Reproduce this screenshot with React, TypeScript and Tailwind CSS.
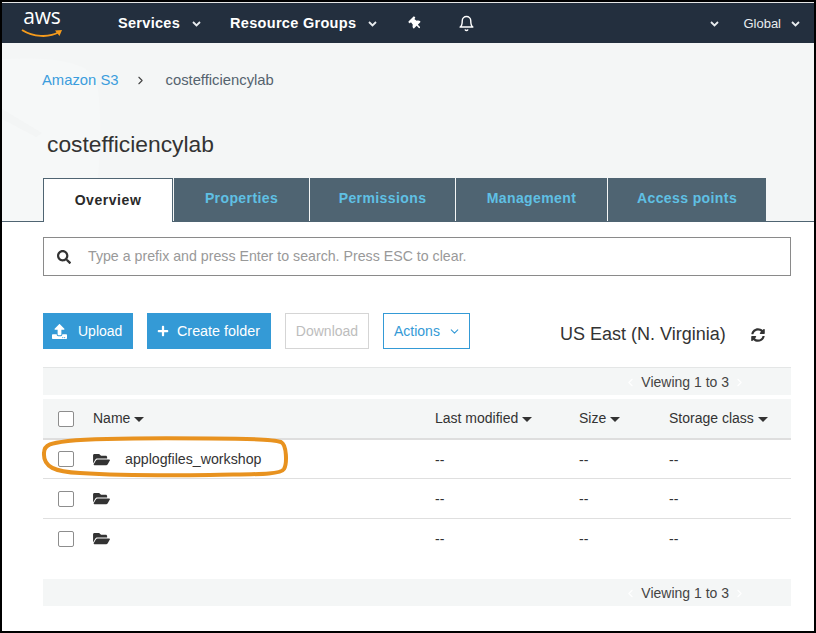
import React from "react";
import { FaFolderOpen, FaPlus, FaSearch, FaSyncAlt, FaThumbtack, FaUpload } from "react-icons/fa";
import { FiBell, FiChevronDown, FiChevronLeft, FiChevronRight } from "react-icons/fi";

function NavCaret() {
  return (
    <svg width="9" height="6" viewBox="0 0 9 6" className="shrink-0">
      <path d="M1 1 L4.5 4.5 L8 1" fill="none" stroke="#e8ecef" strokeWidth="1.8" />
    </svg>
  );
}

function Sortable({ label, className }: { label: string; className: string }) {
  return (
    <div className={`flex items-center gap-[4px] ${className}`}>
      <span>{label}</span>
      <svg width="10" height="5" viewBox="0 0 10 5" className="mt-[1px] shrink-0">
        <path d="M0 0 H10 L5 5 Z" fill="#333" />
      </svg>
    </div>
  );
}

function Check() {
  return <span className="block h-4 w-4 rounded-[2px] border border-[#8d8d8d] bg-white" />;
}

function Row({ name, h, last }: { name?: string; h: string; last?: boolean }) {
  const shift = last ? "" : "pt-[2px]";
  return (
    <div className={`flex items-center text-[14px] text-[#333] ${last ? "" : "border-b border-[#dfdfdf]"} ${h}`}>
      <div className="ml-[15px] w-[35px]"><Check /></div>
      <FaFolderOpen className={`w-[17px] text-[15px] text-[#333] ${last ? "-mt-[1px]" : ""}`} />
      <span className={`ml-[15px] w-[310px] text-[14.2px] ${shift}`}>{name}</span>
      <span className={`w-[144px] ${shift}`}>--</span>
      <span className={`w-[90px] ${shift}`}>--</span>
      <span className={shift}>--</span>
    </div>
  );
}

function Pager({ className }: { className: string }) {
  return (
    <div className={`flex items-center justify-end bg-[#f4f6f6] pr-[45px] pt-[2px] text-[14px] text-[#444] ${className}`}>
      <FiChevronLeft className="mr-[4px] text-[13px] text-white" />
      <span>Viewing 1 to 3</span>
      <FiChevronRight className="ml-[4px] text-[13px] text-white" />
    </div>
  );
}

export default function App() {
  return (
    <div className="h-[633px] w-[816px] overflow-hidden bg-black p-[2px] font-['Liberation_Sans',Arial,sans-serif]">
      <div className="relative h-full w-full overflow-hidden border-t border-[#e6e6e6] bg-white">
        <header className="flex h-[40px] items-center bg-[#232f3e] text-white">
          <div className="relative ml-[19px] -mt-[2px] flex h-[34px] w-[42px] flex-col items-center">
            <span className="font-['Open_Sans',sans-serif] text-[21px] leading-[23px] tracking-[-0.2px]">aws</span>
            <svg width="42" height="10" viewBox="0 0 42 10" className="mt-0">
              <path d="M1 2 C 12 9, 28 10, 38 4" fill="none" stroke="#f59b1c" strokeWidth="2" />
              <path d="M34 2.5 L41 2 L38.5 8 Z" fill="#f59b1c" />
            </svg>
          </div>
          <div className="ml-[55px] flex items-center gap-[12px] pt-[2px] text-[14.5px] font-bold tracking-[0.3px]">
            <span>Services</span><NavCaret />
          </div>
          <div className="ml-[29px] flex items-center gap-[12px] pt-[2px] text-[14.5px] font-bold tracking-[0.3px]">
            <span>Resource Groups</span><NavCaret />
          </div>
          <FaThumbtack className="ml-[32px] -rotate-45 text-[13px]" />
          <FiBell className="ml-[36px] text-[17px]" />
          <div className="ml-auto flex items-center pt-[2px]">
            <NavCaret />
            <span className="ml-[24px] text-[13px] text-[#e8ecef]">Global</span>
            <span className="ml-[10px] mr-[14px]"><NavCaret /></span>
          </div>
        </header>

        <section className="relative h-[179px] overflow-hidden bg-[#f4f6f6]">
          <svg className="absolute left-0 top-0" width="100" height="179" viewBox="0 0 100 179">
            <path d="M0 16 C 40 14, 90 16, 95 40 C 100 70, 100 120, 90 179 L0 179 Z" fill="#f6f8f8" />
            <path d="M0 66 L40 90 L34 94 L0 76 Z" fill="#f3f5f5" />
          </svg>
          <div className="relative flex items-center pl-[40px] pt-[27px] text-[14.8px] leading-[20px]">
            <span className="text-[#3b9ddd]">Amazon S3</span>
            <FiChevronRight className="ml-[15px] text-[13px] text-[#444]" />
            <span className="ml-[19px] text-[#55636e]">costefficiencylab</span>
          </div>
          <h1 className="relative ml-[45px] mt-[40px] text-[22.8px] font-normal leading-[28px] text-[#333]">costefficiencylab</h1>
          <div className="absolute inset-x-0 bottom-0 h-px bg-[#4f6472]" />
          <div className="absolute bottom-0 left-[41px] flex h-[44px] items-stretch">
            <div className="z-10 flex w-[130px] items-center justify-center border border-b-0 border-[#4f6472] bg-white text-[14px] font-bold tracking-[0.55px] text-[#2a2a2a]">Overview</div>
            {[["Properties", "w-[135px]"], ["Permissions", "w-[145px]"], ["Management", "w-[151px]"], ["Access points", "w-[158px]"]].map(([t, w]) => (
              <div key={t} className={`mb-[1px] ml-[1px] flex items-center justify-center bg-[#4f6472] pb-[2px] text-[14px] font-bold tracking-[0.4px] text-[#5fc0e4] ${w}`}>{t}</div>
            ))}
          </div>
        </section>

        <main className="pl-[41px] pr-[23px]">
          <div className="mt-[15px] flex h-[39px] items-center border border-[#8a8a8a] pl-[13px] text-[14.2px] text-[#999]">
            <FaSearch className="text-[14px] text-[#333]" />
            <span className="ml-[17px]">Type a prefix and press Enter to search. Press ESC to clear.</span>
          </div>

          <div className="mt-[37px] flex h-[36px] items-center text-[14px]">
            <div className="flex h-full w-[90px] items-center bg-[#349ad6] pl-[9px] text-white">
              <FaUpload className="text-[15px]" /><span className="ml-[11px]">Upload</span>
            </div>
            <div className="ml-[14px] flex h-full w-[124px] items-center bg-[#349ad6] pl-[10px] text-white">
              <FaPlus className="text-[12px]" /><span className="ml-[8px] pt-[2px] text-[14.35px]">Create folder</span>
            </div>
            <div className="ml-[14px] flex h-full w-[84px] items-center justify-center border border-[#d5d5d5] text-[#bdbdbd]">Download</div>
            <div className="ml-[14px] flex h-full w-[87px] items-center border border-[#349ad6] pl-[10px] text-[#349ad6]">
              <span>Actions</span><FiChevronDown className="ml-[8px] text-[13px]" />
            </div>
            <span className="ml-[90px] pt-[7px] text-[18px] text-[#333]">US East (N. Virginia)</span>
            <FaSyncAlt className="ml-[25px] mt-[7px] text-[14px] text-[#333]" />
          </div>

          <Pager className="mt-[18px] h-[28px] border-t border-[#e4e6e6]" />

          <div className="mt-[4px] flex h-[41px] items-center border-b-2 border-[#dedede] bg-[#f4f6f6] text-[14px] text-[#333]">
            <div className="ml-[15px] w-[35px]"><Check /></div>
            <Sortable label="Name" className="w-[342px]" />
            <Sortable label="Last modified" className="w-[144px]" />
            <Sortable label="Size" className="w-[90px]" />
            <Sortable label="Storage class" className="" />
          </div>

          <Row name="applogfiles_workshop" h="h-[39px]" />
          <Row h="h-[40px]" />
          <Row h="h-[40px]" last />

          <Pager className="mt-[20px] h-[27px]" />
        </main>

        <svg className="pointer-events-none absolute left-[38px] top-[432px]" width="252" height="44" viewBox="0 0 252 44">
          <path d="M4 18 C 4 9, 12 8, 28 6 C 60 3, 120 3, 170 3.5 C 205 3.5, 232 4, 241 7 C 247 10, 247 29, 244 34 C 240 40, 215 39, 170 40 C 130 40.5, 80 40.5, 40 38 C 15 37, 3 32, 4 18 Z" fill="none" stroke="#e8921f" strokeWidth="4" />
        </svg>
      </div>
    </div>
  );
}
